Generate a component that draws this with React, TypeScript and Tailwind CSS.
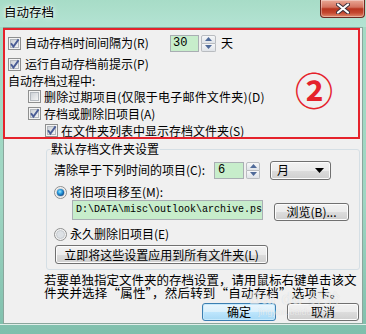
import React from "react";

const cjk = "font-[family-name:'Noto_Sans_CJK_SC','Noto_Sans',sans-serif]";

function Check({ checked }: { checked: boolean }) {
  return (
    <svg width="13" height="13" viewBox="0 0 13 13" className="shrink-0">
      <defs>
        <linearGradient id="cbg" x1="0" y1="0" x2="1" y2="1">
          <stop offset="0" stopColor="#c9ced4" />
          <stop offset="1" stopColor="#f7f7f7" />
        </linearGradient>
      </defs>
      <rect x="0.5" y="0.5" width="12" height="12" fill="#f4f4f4" stroke="#8e8f8f" />
      <rect x="2.5" y="2.5" width="8" height="8" fill="url(#cbg)" stroke="#b3b8be" />
      {checked && (
        <path d="M3 6.3 L5.4 9.6 L10.6 2.4" fill="none" stroke="#4a5d96" strokeWidth="1.9" />
      )}
    </svg>
  );
}

function Radio({ on }: { on: boolean }) {
  return (
    <svg width="13" height="13" viewBox="0 0 13 13" className="shrink-0">
      <defs>
        <radialGradient id="rdot" cx="0.42" cy="0.38" r="0.7">
          <stop offset="0" stopColor="#9eeaff" />
          <stop offset="0.45" stopColor="#2597dc" />
          <stop offset="1" stopColor="#0b3a78" />
        </radialGradient>
      </defs>
      <circle cx="6.5" cy="6.5" r="6" fill="#f3f3f3" stroke="#8e8f8f" />
      <circle cx="6.5" cy="6.5" r="4" fill="#dde1e5" stroke="#bfc4c9" strokeWidth="0.8" />
      {on && <circle cx="6.5" cy="6.5" r="3.6" fill="url(#rdot)" />}
    </svg>
  );
}

function Spinner({ w, h }: { w: string; h: string }) {
  return (
    <div className={`flex flex-col ${w} ${h} shrink-0`}>
      <div className="flex-1 flex items-center justify-center border border-[#b9bcc0] rounded-t-[2px] bg-[linear-gradient(#f6f7f8,#dfe3e8)]">
        <svg width="7" height="4" viewBox="0 0 7 4">
          <path d="M0 4 L3.5 0 L7 4 Z" fill="#4f6a99" />
        </svg>
      </div>
      <div className="flex-1 flex items-center justify-center border border-t-0 border-[#b9bcc0] rounded-b-[2px] bg-[linear-gradient(#f6f7f8,#dfe3e8)]">
        <svg width="7" height="4" viewBox="0 0 7 4">
          <path d="M0 0 L3.5 4 L7 0 Z" fill="#4f6a99" />
        </svg>
      </div>
    </div>
  );
}

const btn =
  "flex items-center justify-center rounded-[3px] border border-[#707070] bg-[linear-gradient(#f2f2f2,#ebebeb_50%,#dddddd_50%,#cfcfcf)] shadow-[inset_0_0_0_1px_#fcfcfc] text-[12px] text-black";

export default function App() {
  return (
    <div className={`w-[366px] h-[334px] flex flex-col bg-[linear-gradient(#a4dbc5,#9fd6c3_60%,#7fbfac)] ${cjk} text-black overflow-hidden`}>
      {/* Title bar */}
      <div className="h-[27px] flex justify-between items-start shrink-0 bg-[linear-gradient(#a7dcc7,#b4e3d3)]">
        <div className="h-[25px] flex items-center pl-[4px] text-[12.5px] [text-shadow:0_0_6px_#ffffff,0_0_3px_#ffffff]">
          自动存档
        </div>
        <div className="mr-[1px] w-[45px] h-[18px] flex items-center justify-center rounded-b-[4px] border border-t-0 border-[#6d2a22] bg-[linear-gradient(#e9a896,#d4735f_42%,#b8351f_52%,#c4472f_75%,#e08a6d)] shadow-[inset_0_0_0_1px_rgba(255,255,255,0.35)]">
          <svg width="14" height="11" viewBox="0 0 14 11">
            <path d="M2 1.5 L12 9.5 M12 1.5 L2 9.5" stroke="#3b2f3a" strokeWidth="4" strokeLinecap="round" />
            <path d="M2 1.5 L12 9.5 M12 1.5 L2 9.5" stroke="#ffffff" strokeWidth="2.2" strokeLinecap="round" />
          </svg>
        </div>
      </div>

      {/* Body */}
      <div className="relative mx-[3px] h-[297px] shrink-0 bg-[#f0f0f0] border border-[#8aa69c] text-[12px] leading-[14px]">
        <div className="mt-[4px] h-[22px] flex items-center">
          <div className="w-[162px] ml-[4px] flex items-center gap-[4px]">
            <Check checked />
            <span className="whitespace-nowrap">自动存档时间间隔为(R)</span>
          </div>
          <div className="w-[29px] h-[17px] border border-[#a9aeb3] bg-[#c7edcb] flex items-center pl-[2px] text-[12px] font-[family-name:'Liberation_Mono',monospace]">
            30
          </div>
          <div className="ml-[2px]">
            <Spinner w="w-[15px]" h="h-[17px]" />
          </div>
          <span className="ml-[5px]">天</span>
        </div>

        <div className="h-[20px] flex items-center ml-[4px] gap-[4px]">
          <Check checked />
          <span className="whitespace-nowrap">运行自动存档前提示(P)</span>
        </div>

        <div className="h-[13px] flex items-center ml-[4px]">
          <span className="whitespace-nowrap">自动存档过程中:</span>
        </div>

        <div className="h-[19px] flex items-center ml-[24px] gap-[3px]">
          <Check checked={false} />
          <span className="whitespace-nowrap tracking-[0.2px]">删除过期项目(仅限于电子邮件文件夹)(D)</span>
        </div>

        <div className="h-[15px] flex items-center ml-[24px] gap-[3px]">
          <Check checked />
          <span className="whitespace-nowrap">存档或删除旧项目(A)</span>
        </div>

        <div className="h-[19px] flex items-center ml-[41px] gap-[3px]">
          <Check checked />
          <span className="whitespace-nowrap">在文件夹列表中显示存档文件夹(S)</span>
        </div>

        {/* Group box */}
        <div className="mt-[9px] ml-[42px] w-[314px] h-[121px] border border-[#d5dfe5] rounded-[3px] flex flex-col">
          <div className="-mt-[8px] ml-[3px] px-[1px] w-fit h-[14px] leading-[14px] bg-[#f0f0f0] whitespace-nowrap">
            默认存档文件夹设置
          </div>

          <div className="mt-[4px] h-[20px] flex items-center pl-[7px]">
            <span className="w-[160px] whitespace-nowrap">清除早于下列时间的项目(C):</span>
            <div className="w-[30px] h-[17px] border border-[#a9aeb3] bg-[#c7edcb] flex items-center pl-[3px] text-[12px] font-[family-name:'Liberation_Mono',monospace]">
              6
            </div>
            <div className="ml-[2px]">
              <Spinner w="w-[14px]" h="h-[17px]" />
            </div>
            <div className="ml-[10px] w-[61px] h-[19px] flex items-center justify-between pl-[6px] pr-[6px] rounded-[3px] border border-[#707070] bg-[linear-gradient(#f2f2f2,#ebebeb_50%,#dddddd_50%,#cfcfcf)] shadow-[inset_0_0_0_1px_#fcfcfc]">
              <span>月</span>
              <svg width="9" height="5" viewBox="0 0 9 5">
                <path d="M0 0 L9 0 L4.5 5 Z" fill="#000" />
              </svg>
            </div>
          </div>

          <div className="mt-[2px] h-[20px] flex items-center pl-[7px] gap-[3px]">
            <Radio on />
            <span className="whitespace-nowrap">将旧项目移至(M):</span>
          </div>

          <div className="-mt-[2px] h-[22px] flex items-start pl-[25px]">
            <div className="w-[191px] h-[20px] border border-[#a9aeb3] bg-[#c7edcb] flex items-center pl-[3px] overflow-hidden whitespace-nowrap text-[10px] font-[family-name:'Liberation_Mono',monospace]">
              D:\DATA\misc\outlook\archive.ps
            </div>
            <div className={`ml-[11px] mt-[3px] w-[75px] h-[18px] ${btn}`}>浏览(B)...</div>
          </div>

          <div className="mt-[2px] h-[20px] flex items-center pl-[7px] gap-[3px]">
            <Radio on={false} />
            <span className="whitespace-nowrap">永久删除旧项目(E)</span>
          </div>

          <div className={`mt-[1px] ml-[8px] w-[213px] h-[19px] ${btn}`}>立即将这些设置应用到所有文件夹(L)</div>
        </div>

        <div className="mt-[4px] ml-[40px] text-[12.5px] leading-[12.5px] whitespace-nowrap">
          <div>若要单独指定文件夹的存档设置，请用鼠标右键单击该文</div>
          <div className="tracking-[0.2px]">件夹并选择“属性”，然后转到“自动存档”选项卡。</div>
        </div>

        <div className="mt-[4px] ml-[198px] flex">
          <div className="w-[74px] h-[18px] flex items-center justify-center rounded-[3px] border border-[#3c7fb1] bg-[linear-gradient(#eaf6fd,#d9f0fc_50%,#bee6fd_50%,#a7d9f5)] shadow-[inset_0_0_0_1px_#c6e9fc] text-[12px]">
            确定
          </div>
          <div className={`ml-[11px] w-[72px] h-[18px] ${btn}`}>取消</div>
        </div>

        {/* Annotation overlay */}
        <div className="absolute left-[-1px] top-[0px] w-[357px] h-[111px] border-2 border-[#e5222b] pointer-events-none" />
        <div className="absolute left-[291px] top-[42px] text-[38px] leading-[38px] font-bold text-[#e5222b] pointer-events-none">
          ②
        </div>

        {/* Watermark */}
        <div className="absolute left-[245px] top-[262px] flex flex-col items-center pointer-events-none text-white/60 [text-shadow:0_0_1px_rgba(0,0,0,0.12)]">
          <div className="flex items-end gap-[6px]">
            <span className="text-[17px] leading-[17px] font-bold font-[family-name:'Liberation_Sans',sans-serif]">Bai</span>
            <span className="text-[17px] leading-[17px] font-bold font-[family-name:'Liberation_Sans',sans-serif]">du</span>
            <span className="text-[16px] leading-[17px]">经验</span>
          </div>
          <span className="text-[9px] leading-[10px] font-[family-name:'Liberation_Sans',sans-serif]">jingyan.baidu.com</span>
        </div>
      </div>

      <div className="flex-1 border-t border-[#dfeee9]" />
    </div>
  );
}
